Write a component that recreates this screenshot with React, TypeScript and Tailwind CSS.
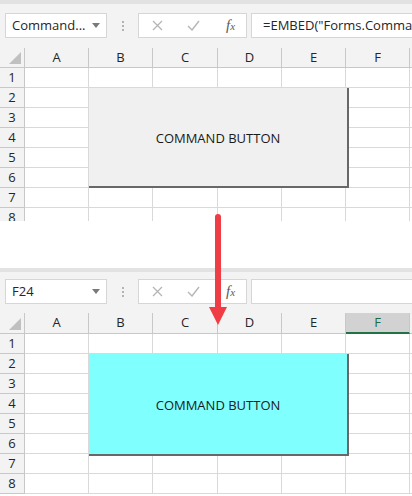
import React from 'react';

const font = { fontFamily: '"Open Sans", "Noto Sans", Arial, sans-serif' };

const colWidths = ['w-[25px]', 'w-[64px]', 'w-[64px]', 'w-[65px]', 'w-[64px]', 'w-[64px]', 'w-[64px]'];
const letters = ['A', 'B', 'C', 'D', 'E', 'F'];

function Toolbar({ name, formula, pad }: { name: string; formula: string; pad: string }) {
  return (
    <div className={`bg-[#f3f3f3] ${pad}`}>
      <div className="flex items-center h-[25px]">
        <div className="ml-[5px] w-[102px] h-[25px] bg-white border border-[#d6d6d6] flex items-center pl-[6px] pr-[6px]">
          <span className="flex-1 text-[13px] text-[#262626] leading-none">{name}</span>
          <svg width="8" height="5" viewBox="0 0 8 5"><path d="M0 0h8L4 5z" fill="#7a7a7a" /></svg>
        </div>
        <div className="w-[31px] flex flex-col items-center gap-[2px]">
          <span className="w-[2px] h-[2px] bg-[#b3b3b3]" />
          <span className="w-[2px] h-[2px] bg-[#b3b3b3]" />
          <span className="w-[2px] h-[2px] bg-[#b3b3b3]" />
        </div>
        <div className="w-[109px] h-[25px] bg-white border border-[#d6d6d6] flex items-center">
          <svg className="ml-[13px]" width="11" height="11" viewBox="0 0 11 11">
            <path d="M1 1l9 9M10 1l-9 9" stroke="#b5b5b5" strokeWidth="1.3" />
          </svg>
          <svg className="ml-[24px]" width="13" height="11" viewBox="0 0 13 11">
            <path d="M1 6l4 4 7-9" stroke="#b5b5b5" strokeWidth="1.4" fill="none" />
          </svg>
          <span className="ml-[26px] text-[15px] italic text-[#5a5a5a] leading-none" style={{ fontFamily: '"Liberation Serif", serif' }}>
            f<span className="text-[11px]">x</span>
          </span>
        </div>
        <div className="ml-[4px] flex-1 h-[25px] bg-white border border-[#d6d6d6] border-r-0 flex items-center pl-[11px] overflow-hidden whitespace-nowrap">
          <span className="text-[13px] text-[#262626] leading-none">{formula}</span>
        </div>
      </div>
    </div>
  );
}

function Sheet({
  name,
  formula,
  pad,
  headerH,
  rows,
  height,
  selected,
  btnBg,
  btnH,
}: {
  name: string;
  formula: string;
  pad: string;
  headerH: string;
  rows: number;
  height: string;
  selected?: string;
  btnBg: string;
  btnH: string;
}) {
  return (
    <div className={`${height} overflow-hidden bg-white relative`}>
      <div className="h-[4px] bg-[#e2e2e2]" />
      <Toolbar name={name} formula={formula} pad={pad} />
      <div className={`flex ${headerH} bg-[#f3f3f3]`}>
        <div className={`${colWidths[0]} shrink-0 border-r border-b border-[#c8c8c8] relative`}>
          <svg className="absolute right-[3px] bottom-[3px]" width="12" height="12" viewBox="0 0 12 12">
            <path d="M12 0v12H0z" fill="#c0c0c0" />
          </svg>
        </div>
        {letters.map((l, i) => (
          <div
            key={l}
            className={`${colWidths[i + 1]} shrink-0 flex items-center justify-center text-[13px] border-r border-[#c8c8c8] ${
              selected === l ? 'bg-[#d2d2d2] text-[#1e6b41] border-b-2 border-b-[#217346]' : 'text-[#262626] border-b border-b-[#c8c8c8]'
            }`}
          >
            {l}
          </div>
        ))}
        <div className="flex-1 border-b border-[#c8c8c8]" />
      </div>
      <div className="relative">
        {Array.from({ length: rows }).map((_, r) => (
          <div key={r} className="flex h-[20px]">
            <div className={`${colWidths[0]} shrink-0 bg-[#f3f3f3] border-r border-b border-[#c8c8c8] flex items-center justify-center text-[13px] text-[#262626]`}>
              {r + 1}
            </div>
            {letters.map((l, i) => (
              <div key={l} className={`${colWidths[i + 1]} shrink-0 border-r border-b border-[#d9d9d9]`} />
            ))}
            <div className="flex-1 border-b border-[#d9d9d9]" />
          </div>
        ))}
        <div
          className={`absolute left-[89px] top-[20px] w-[260px] ${btnH} ${btnBg} border-r-2 border-b-2 border-[#686868] flex items-center justify-center pt-[3px] text-[13px] text-[#1a1a1a]`}
        >
          COMMAND BUTTON
        </div>
      </div>
    </div>
  );
}

export default function App() {
  return (
    <div className="w-[412px] h-[496px] bg-white relative overflow-hidden" style={font}>
      <Sheet
        name="Command..."
        formula={'=EMBED("Forms.CommandButton.1","")'}
        pad="pt-[9px] pb-[10px]"
        headerH="h-[20px]"
        rows={8}
        height="h-[221px]"
        btnBg="bg-[#f0f0f0]"
        btnH="h-[100px]"
      />
      <div className="h-[47px]" />
      <Sheet
        name="F24"
        formula=""
        pad="pt-[7px] pb-[9px]"
        headerH="h-[21px]"
        rows={8}
        height="h-[228px]"
        selected="F"
        btnBg="bg-[#80ffff]"
        btnH="h-[102px]"
      />
      <svg className="absolute left-[208px] top-[212px]" width="20" height="115" viewBox="0 0 20 115">
        <rect x="7" y="2" width="6" height="96" rx="3" fill="#f03c45" />
        <path d="M1 95h18L10 113z" fill="#f03c45" />
      </svg>
    </div>
  );
}
